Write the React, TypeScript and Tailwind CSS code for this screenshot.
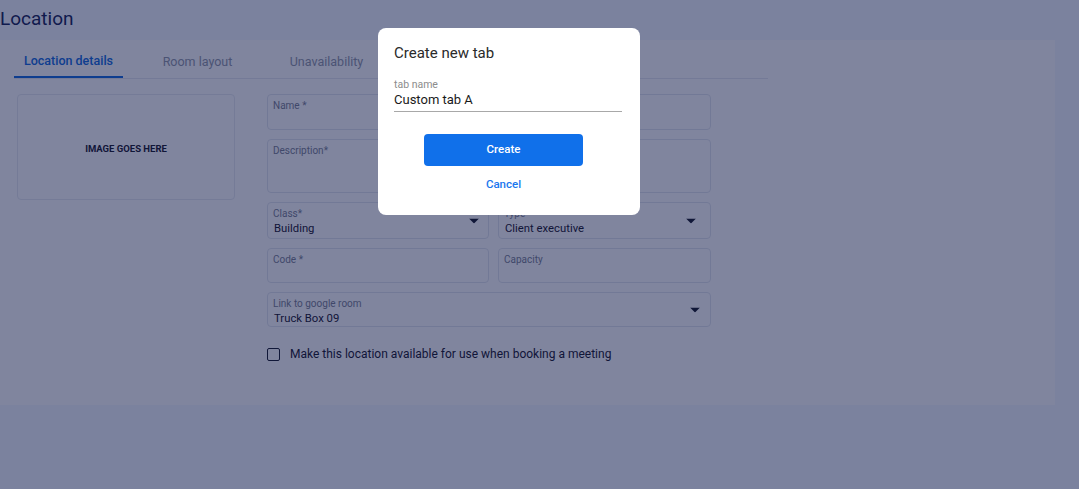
import React from "react";

function Arrow({ className }: { className?: string }) {
  return (
    <svg className={className} width="10" height="5" viewBox="0 0 10 5">
      <path d="M0 0 L10 0 L5 5 Z" fill="#1f2233" />
    </svg>
  );
}

function Field({ label, value, h = "h-[36px]", arrowPr, className = "" }: { label: string; value?: string; h?: string; arrowPr?: string; className?: string }) {
  return (
    <div className={`relative ${h} rounded-[4px] border border-[#e3e6ee] bg-white pl-[5px] pt-[5px] ${className}`}>
      <div className="text-[10px] leading-[12px] text-[#7f8596]">{label}</div>
      {value && <div className="pl-[1px] pt-[1px] text-[11.3px] leading-[16px] text-[#1f2233]">{value}</div>}
      {arrowPr && <Arrow className={`absolute top-1/2 -translate-y-1/2 ${arrowPr}`} />}
    </div>
  );
}

export default function App() {
  return (
    <div className="relative h-[489px] w-full overflow-hidden bg-[#f5f9ff] font-['Roboto',sans-serif]">
      <div className="h-[40px] pt-[6px] text-[19px] leading-[26px] text-[#1f2b5c]">Location</div>
      <div className="h-[365px] w-[1055px] bg-white">
        <div className="ml-[14px] flex w-[754px] gap-[20px] border-b border-[#e6e9f0]">
          <div className="flex h-[38px] w-[109px] items-center justify-center border-b-2 border-[#1a6fe0] pt-[6px] text-[12.5px] font-medium text-[#1a6fe0]">
            Location details
          </div>
          <div className="flex h-[38px] w-[109px] items-center justify-center pt-[6px] text-[12.5px] text-[#959bab]">Room layout</div>
          <div className="flex h-[38px] w-[109px] items-center justify-center pt-[6px] text-[12.5px] text-[#959bab]">Unavailability</div>
        </div>
        <div className="flex pt-[15px]">
          <div className="ml-[17px] flex h-[106px] w-[218px] items-center justify-center rounded-[4px] border border-[#e8ebf1] pt-[4px] text-[9.5px] font-bold text-[#1f2233]">
            IMAGE GOES HERE
          </div>
          <div className="ml-[32px] w-[444px]">
            <div className="grid grid-cols-[222px_213px] gap-x-[9px] gap-y-[9px]">
              <Field label="Name *" />
              <Field label="" />
              <Field label="Description*" h="h-[54px]" />
              <Field label="" h="h-[54px]" />
              <Field label="Class*" value="Building" h="h-[37px]" arrowPr="right-[9px]" />
              <Field label="Type" value="Client executive" h="h-[37px]" arrowPr="right-[14px]" />
              <Field label="Code *" h="h-[35px]" />
              <Field label="Capacity" h="h-[35px]" />
              <Field label="Link to google room" value="Truck Box 09" h="h-[35px]" arrowPr="right-[10px]" className="col-span-2" />
            </div>
            <div className="mt-[18px] flex items-center gap-[10px]">
              <div className="h-[13px] w-[13px] rounded-[2px] border-[1.5px] border-[#1f2233]" />
              <span className="text-[12px] text-[#1f2233]">Make this location available for use when booking a meeting</span>
            </div>
          </div>
        </div>
      </div>

      <div className="absolute inset-0 bg-[rgba(1,11,61,0.5)]" />

      <div className="absolute left-[378px] top-[28px] h-[187px] w-[262px] rounded-[8px] bg-white pl-[16px] pr-[18px] pt-[15px]">
        <div className="text-[15px] leading-[20px] text-[#2a2a2a]">Create new tab</div>
        <div className="mt-[16px] text-[10.5px] leading-[12px] text-[#8c8c8c]">tab name</div>
        <div className="border-b-[1.5px] border-[#a8a8a8] pb-[2px] text-[13px] leading-[18px] text-[#1a1a1a]">Custom tab A</div>
        <div className="ml-[30px] mt-[22px] flex w-[159px] flex-col items-center">
          <button className="flex h-[32px] w-[159px] items-center justify-center rounded-[4px] bg-[#1070ea] text-[11.5px] font-medium text-white">
            Create
          </button>
          <div className="mt-[10px] text-[11.5px] font-medium text-[#1a77ee]">Cancel</div>
        </div>
      </div>
    </div>
  );
}
